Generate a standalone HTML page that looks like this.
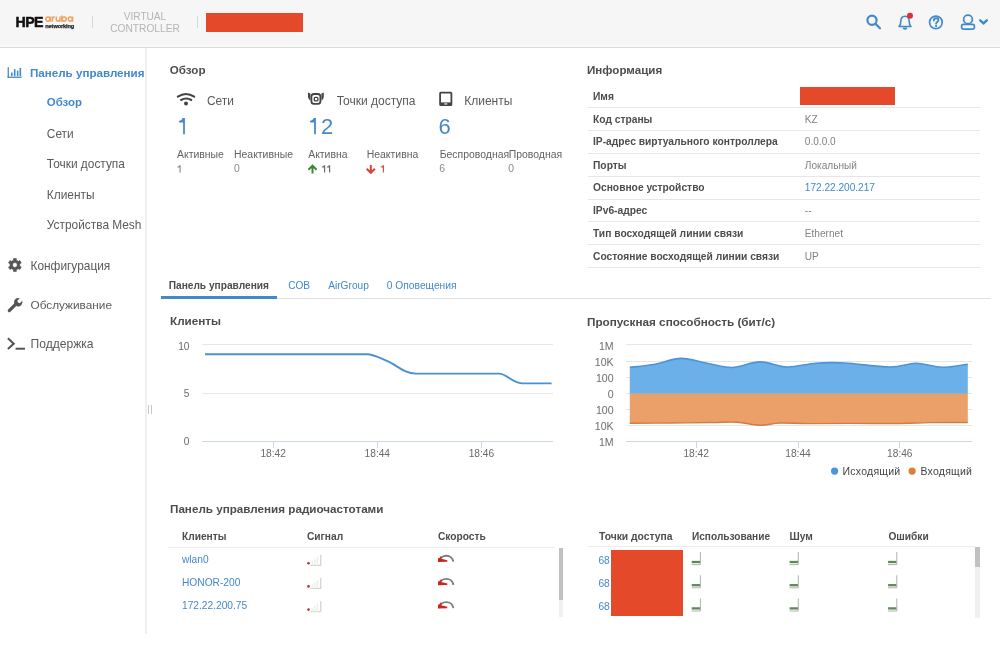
<!DOCTYPE html>
<html><head><meta charset="utf-8"><title>Virtual Controller</title>
<style>
html,body{margin:0;padding:0;background:#fff;width:1000px;height:667px;overflow:hidden;position:relative;}
body{filter:blur(0.3px);font-family:"Liberation Sans",sans-serif;}
.t{position:absolute;white-space:nowrap;line-height:1;}
.r{position:absolute;}
svg.r{overflow:visible;}
</style></head><body>
<div class="r" style="left:0.00px;top:0.00px;width:1000.00px;height:47.00px;background:#f6f6f6;"></div>
<div class="r" style="left:0.00px;top:45.20px;width:1000.00px;height:1.80px;background:#f9f9f9;"></div>
<div class="r" style="left:0.00px;top:47.00px;width:1000.00px;height:1.00px;background:#dcdcdc;"></div>
<div class="t" style="left:15.40px;top:14.700px;font-size:14.2px;font-weight:700;color:#111;letter-spacing:-0.5px;-webkit-text-stroke:0.5px #111;">HPE</div>
<svg class="r" style="left:40px;top:12px" width="40" height="12" viewBox="40 12 40 12"><g fill="none" stroke="#f0a060" stroke-width="1.5">
<circle cx="47.9" cy="19.1" r="2.05"/><path d="M50.1 16.6 V21.8"/>
<path d="M52.2 16.6 V21.8 M52.2 19.4 Q52.3 17.1 54.7 17.1"/>
<path d="M56.3 16.6 V19.3 Q56.3 21.1 58.15 21.1 Q60 21.1 60 19.3 V16.6 M60 19 V21.8"/>
<path d="M61.9 15.4 V21.8"/><circle cx="64.2" cy="19.1" r="2.05"/>
<circle cx="70.3" cy="19.1" r="2.05"/><path d="M72.6 16.6 V21.8"/>
</g></svg>
<div class="t" style="left:45.30px;top:23.600px;font-size:5.6px;font-weight:700;color:#222;letter-spacing:-0.1px;-webkit-text-stroke:0.25px #222;">networking</div>
<div class="r" style="left:91.50px;top:16.00px;width:1.00px;height:12.00px;background:#d8d8d8;"></div>
<div class="t" style="left:45.00px;width:200px;text-align:center;top:12.200px;font-size:10.1px;font-weight:400;color:#b5b5b5;">VIRTUAL</div>
<div class="t" style="left:45.00px;width:200px;text-align:center;top:23.800px;font-size:10.2px;font-weight:400;color:#b5b5b5;">CONTROLLER</div>
<div class="r" style="left:197.00px;top:16.00px;width:1.00px;height:12.00px;background:#d8d8d8;"></div>
<div class="r" style="left:206.00px;top:13.00px;width:97.00px;height:19.00px;background:#e4492a;"></div>
<svg class="r" style="left:860px;top:8px" width="135" height="30" viewBox="860 8 135 30">
<g fill="none" stroke="#4189cc" stroke-width="2.2" stroke-linecap="round">
<circle cx="872" cy="20.3" r="4.6"/><line x1="875.6" y1="24" x2="880" y2="28.3"/>
<path d="M899 26.5 C900.4 25.2 900.8 23.6 900.8 21.6 C900.8 18.4 902.6 16.3 905 16.3 C907.4 16.3 909.2 18.4 909.2 21.6 C909.2 23.6 909.6 25.2 911 26.5 Z" stroke-width="1.6" stroke-linejoin="round"/>
<path d="M903.5 28.3 Q905 29.5 906.5 28.3" stroke-width="1.5"/>
<circle cx="935.9" cy="22.4" r="6.3" stroke-width="1.7"/>
<path d="M933.8 20.6 C933.8 19 934.9 18.2 936.1 18.2 C937.4 18.2 938.4 19 938.4 20.3 C938.4 21.9 936.1 22 936.1 23.6" stroke-width="1.9"/>

<ellipse cx="968" cy="19.4" rx="4.4" ry="4.2" stroke-width="1.7"/>
<rect x="961.6" y="24.3" width="12.8" height="4.9" rx="1.6" stroke-width="1.7"/>
<path d="M980.2 20.3 L983.5 23.4 L986.8 20.3" stroke-width="2.4"/>
</g>
<line x1="903.7" y1="28.3" x2="906.3" y2="28.3" stroke="#4189cc" stroke-width="1.5"/>
<circle cx="936.1" cy="25.9" r="1.1" fill="#4189cc"/>
<circle cx="910" cy="15.8" r="3" fill="#e03030"/>
</svg>
<div class="r" style="left:145.00px;top:48.00px;width:2.00px;height:586.00px;background:#efefef;"></div>
<div class="r" style="left:148.00px;top:405.00px;width:1.00px;height:9.00px;background:#c6c6c6;"></div>
<div class="r" style="left:151.00px;top:405.00px;width:1.00px;height:9.00px;background:#c6c6c6;"></div>
<svg class="r" style="left:0px;top:250px" width="30" height="110" viewBox="0 250 30 110">
<g fill="#555">
<path d="M17.35 260.76 L16.41 260.34 L16.29 258.45 L13.51 258.45 L13.39 260.34 L12.45 260.76 L11.62 261.36 L9.92 260.52 L8.53 262.93 L10.11 263.98 L10.00 265.00 L10.11 266.02 L8.53 267.07 L9.92 269.48 L11.62 268.64 L12.45 269.24 L13.39 269.66 L13.51 271.55 L16.29 271.55 L16.41 269.66 L17.35 269.24 L18.18 268.64 L19.88 269.48 L21.27 267.07 L19.69 266.02 L19.80 265.00 L19.69 263.98 L21.27 262.93 L19.88 260.52 L18.18 261.36 Z M17.30 265.00 A2.4 2.4 0 1 0 12.50 265.00 A2.4 2.4 0 1 0 17.30 265.00 Z" fill-rule="evenodd" stroke="#555" stroke-width="0.6" stroke-linejoin="round"/>
</g>
<path d="M9.3 310.6 L15.8 304.1" stroke="#555" stroke-width="3.2" stroke-linecap="round"/>
<path d="M14.2 303.5 A4.3 4.3 0 0 1 19.8 298.2 L17.3 300.7 L18.0 302.5 L19.8 303.2 L22.2 300.8 A4.3 4.3 0 0 1 16.8 306.2 Z" fill="#555"/>
<path d="M7.9 338.3 L13.7 343.7 L7.9 349.1" fill="none" stroke="#555" stroke-width="2.1"/>
<rect x="15.6" y="347.7" width="9.4" height="2" fill="#555"/>
</svg>
<svg class="r" style="left:5px;top:64px" width="20" height="16" viewBox="5 64 20 16">
<g fill="#4189cc">
<rect x="7.6" y="67.2" width="1.3" height="10.7"/><rect x="7.6" y="76.6" width="14.1" height="1.3"/>
<rect x="11" y="72.5" width="1.6" height="3.6"/><rect x="13.9" y="69.2" width="1.6" height="6.9"/>
<rect x="16.9" y="70.7" width="1.5" height="5.4"/><rect x="19.5" y="68" width="1.6" height="8.1"/>
</g></svg>
<div class="t" style="left:30.00px;top:66.700px;font-size:11.6px;font-weight:700;color:#4189cc;">Панель управления</div>
<div class="t" style="left:46.80px;top:97.000px;font-size:11.45px;font-weight:700;color:#4189cc;">Обзор</div>
<div class="t" style="left:46.80px;top:128.500px;font-size:11.9px;font-weight:400;color:#5a5a5a;">Сети</div>
<div class="t" style="left:46.80px;top:159.200px;font-size:11.9px;font-weight:400;color:#5a5a5a;">Точки доступа</div>
<div class="t" style="left:46.80px;top:189.800px;font-size:11.9px;font-weight:400;color:#5a5a5a;">Клиенты</div>
<div class="t" style="left:46.80px;top:220.400px;font-size:11.9px;font-weight:400;color:#5a5a5a;">Устройства Mesh</div>
<div class="t" style="left:30.50px;top:261.200px;font-size:11.9px;font-weight:400;color:#5a5a5a;">Конфигурация</div>
<div class="t" style="left:30.50px;top:299.500px;font-size:11.8px;font-weight:400;color:#5a5a5a;">Обслуживание</div>
<div class="t" style="left:30.50px;top:338.300px;font-size:12.1px;font-weight:400;color:#5a5a5a;">Поддержка</div>
<div class="t" style="left:169.80px;top:63.800px;font-size:11.6px;font-weight:700;color:#4d4d4d;">Обзор</div>
<svg class="r" style="left:170px;top:85px" width="300" height="25" viewBox="170 85 300 25">
<g fill="none" stroke="#444" stroke-width="2.1" stroke-linecap="round">
<path d="M177.8 96.7 Q186 91.3 194.2 96.7"/><path d="M181.1 100 Q186.2 97 191.3 100"/>
</g>
<circle cx="186" cy="103.6" r="2" fill="#444"/>
<rect x="311.4" y="94" width="9" height="9.8" rx="2.6" fill="none" stroke="#444" stroke-width="1.8"/>
<path d="M308 92.4 L310.4 93.6 L310.4 100.8 Q308.4 99.5 308 97 Z" fill="#444"/>
<path d="M323.8 92.4 L321.4 93.6 L321.4 100.8 Q323.4 99.5 323.8 97 Z" fill="#444"/>
<rect x="314.3" y="97.3" width="3.6" height="3.6" rx="1" fill="none" stroke="#444" stroke-width="1.3"/>
<rect x="440.1" y="92.6" width="11.3" height="12.6" rx="0.6" fill="none" stroke="#444" stroke-width="1.8"/>
<rect x="440.1" y="102.4" width="11.3" height="3" fill="#444"/>
<rect x="444.3" y="103.4" width="3" height="1.1" fill="#fff"/>
</svg>
<div class="t" style="left:207.00px;top:95.700px;font-size:11.9px;font-weight:400;color:#5a5a5a;">Сети</div>
<div class="t" style="left:336.70px;top:94.500px;font-size:12.0px;font-weight:400;color:#5a5a5a;">Точки доступа</div>
<div class="t" style="left:464.20px;top:94.500px;font-size:12.0px;font-weight:400;color:#5a5a5a;">Клиенты</div>
<div class="t" style="left:320.90px;top:116.300px;font-size:22px;font-weight:400;color:#4689c8;">2</div>
<div class="t" style="left:438.60px;top:116.300px;font-size:22px;font-weight:400;color:#4689c8;">6</div>
<svg class="r" style="left:0;top:0" width="1000" height="667" viewBox="0 0 1000 667"><path d="M184.90 118.10 L184.90 134.20 L183.10 134.20 L183.10 122.50 L179.00 122.50 L179.00 120.90 Q181.80 120.70 182.70 118.10 Z" fill="#4689c8"/><path d="M315.90 118.10 L315.90 134.20 L314.10 134.20 L314.10 122.50 L310.00 122.50 L310.00 120.90 Q312.80 120.70 313.70 118.10 Z" fill="#4689c8"/></svg>
<div class="t" style="left:177.00px;top:150.400px;font-size:10.45px;font-weight:400;color:#626262;">Активные</div>
<div class="t" style="left:234.00px;top:150.400px;font-size:10.45px;font-weight:400;color:#626262;">Неактивные</div>
<div class="t" style="left:308.20px;top:150.400px;font-size:10.45px;font-weight:400;color:#626262;">Активна</div>
<div class="t" style="left:366.70px;top:150.400px;font-size:10.45px;font-weight:400;color:#626262;">Неактивна</div>
<div class="t" style="left:439.70px;top:150.400px;font-size:10.45px;font-weight:400;color:#626262;">Беспроводная</div>
<div class="t" style="left:508.70px;top:150.400px;font-size:10.45px;font-weight:400;color:#626262;">Проводная</div>
<div class="t" style="left:234.00px;top:164.400px;font-size:10.4px;font-weight:400;color:#8a8a8a;">0</div>
<div class="t" style="left:439.20px;top:164.400px;font-size:10.4px;font-weight:400;color:#8a8a8a;">6</div>
<div class="t" style="left:508.20px;top:164.400px;font-size:10.4px;font-weight:400;color:#8a8a8a;">0</div>
<svg class="r" style="left:0;top:0" width="1000" height="667" viewBox="0 0 1000 667"><path d="M180.70 165.20 L180.70 172.60 L179.50 172.60 L179.50 167.40 L177.40 167.40 L177.40 166.50 Q178.90 166.40 179.40 165.20 Z" fill="#8f8f8f"/><path d="M325.20 165.30 L325.20 172.60 L324.00 172.60 L324.00 167.50 L321.90 167.50 L321.90 166.60 Q323.40 166.50 323.90 165.30 Z" fill="#6f6f6f"/><path d="M330.20 165.30 L330.20 172.60 L329.00 172.60 L329.00 167.50 L326.90 167.50 L326.90 166.60 Q328.40 166.50 328.90 165.30 Z" fill="#6f6f6f"/><path d="M384.00 165.30 L384.00 172.60 L382.80 172.60 L382.80 167.50 L380.70 167.50 L380.70 166.60 Q382.20 166.50 382.70 165.30 Z" fill="#d9504a"/></svg>
<svg class="r" style="left:300px;top:160px" width="90" height="18" viewBox="300 160 90 18">
<g fill="none" stroke-width="1.8" stroke-linecap="butt">
<path d="M312.5 173.5 V166.2 M308.4 169.8 L312.5 165.7 L316.6 169.8" stroke="#3b8a3b" stroke-width="2"/>
<path d="M370.8 165 V172.3 M366.7 168.7 L370.8 172.8 L374.9 168.7" stroke="#d9443a" stroke-width="2"/>
</g></svg>
<div class="t" style="left:587.00px;top:64.000px;font-size:11.6px;font-weight:700;color:#4d4d4d;">Информация</div>
<div class="r" style="left:587.60px;top:107.00px;width:392.20px;height:1.00px;background:#e6e6e6;"></div>
<div class="r" style="left:587.60px;top:129.70px;width:392.20px;height:1.00px;background:#e6e6e6;"></div>
<div class="r" style="left:587.60px;top:152.80px;width:392.20px;height:1.00px;background:#e6e6e6;"></div>
<div class="r" style="left:587.60px;top:175.50px;width:392.20px;height:1.00px;background:#e6e6e6;"></div>
<div class="r" style="left:587.60px;top:198.50px;width:392.20px;height:1.00px;background:#e6e6e6;"></div>
<div class="r" style="left:587.60px;top:221.30px;width:392.20px;height:1.00px;background:#e6e6e6;"></div>
<div class="r" style="left:587.60px;top:244.00px;width:392.20px;height:1.00px;background:#e6e6e6;"></div>
<div class="r" style="left:587.60px;top:266.70px;width:392.20px;height:1.00px;background:#e6e6e6;"></div>
<div class="t" style="left:593.00px;top:91.900px;font-size:10.25px;font-weight:700;color:#4d4d4d;">Имя</div>
<div class="t" style="left:593.00px;top:114.700px;font-size:10.25px;font-weight:700;color:#4d4d4d;">Код страны</div>
<div class="t" style="left:804.80px;top:114.700px;font-size:10.1px;font-weight:400;color:#828282;">KZ</div>
<div class="t" style="left:593.00px;top:137.400px;font-size:10.25px;font-weight:700;color:#4d4d4d;">IP-адрес виртуального контроллера</div>
<div class="t" style="left:804.80px;top:137.400px;font-size:10.1px;font-weight:400;color:#828282;">0.0.0.0</div>
<div class="t" style="left:593.00px;top:160.500px;font-size:10.25px;font-weight:700;color:#4d4d4d;">Порты</div>
<div class="t" style="left:804.80px;top:160.500px;font-size:10.1px;font-weight:400;color:#828282;">Локальный</div>
<div class="t" style="left:593.00px;top:183.200px;font-size:10.25px;font-weight:700;color:#4d4d4d;">Основное устройство</div>
<div class="t" style="left:804.80px;top:183.200px;font-size:10.1px;font-weight:400;color:#4189cc;">172.22.200.217</div>
<div class="t" style="left:593.00px;top:206.200px;font-size:10.25px;font-weight:700;color:#4d4d4d;">IPv6-адрес</div>
<div class="t" style="left:804.80px;top:206.200px;font-size:10.1px;font-weight:400;color:#828282;">--</div>
<div class="t" style="left:593.00px;top:229.000px;font-size:10.25px;font-weight:700;color:#4d4d4d;">Тип восходящей линии связи</div>
<div class="t" style="left:804.80px;top:229.000px;font-size:10.1px;font-weight:400;color:#828282;">Ethernet</div>
<div class="t" style="left:593.00px;top:251.700px;font-size:10.25px;font-weight:700;color:#4d4d4d;">Состояние восходящей линии связи</div>
<div class="t" style="left:804.80px;top:251.700px;font-size:10.1px;font-weight:400;color:#828282;">UP</div>
<div class="r" style="left:800.00px;top:86.70px;width:95.00px;height:18.10px;background:#e4492a;"></div>
<div class="r" style="left:160.90px;top:297.50px;width:830.10px;height:1.00px;background:#e2e2e2;"></div>
<div class="r" style="left:160.90px;top:296.00px;width:115.90px;height:3.00px;background:#4189cc;"></div>
<div class="t" style="left:168.70px;top:280.800px;font-size:10.16px;font-weight:700;color:#4d4d4d;">Панель управления</div>
<div class="t" style="left:288.20px;top:280.800px;font-size:10.1px;font-weight:400;color:#4189cc;">COB</div>
<div class="t" style="left:328.20px;top:280.800px;font-size:10.17px;font-weight:400;color:#4189cc;">AirGroup</div>
<div class="t" style="left:386.80px;top:280.800px;font-size:10.26px;font-weight:400;color:#4189cc;">0 Оповещения</div>
<div class="t" style="left:170.00px;top:314.700px;font-size:11.7px;font-weight:700;color:#4d4d4d;">Клиенты</div>
<div class="r" style="left:202.00px;top:343.60px;width:351.30px;height:1.00px;background:#e6e6e6;"></div>
<div class="r" style="left:202.00px;top:393.20px;width:351.30px;height:1.00px;background:#e6e6e6;"></div>
<div class="r" style="left:202.00px;top:440.70px;width:351.30px;height:1.00px;background:#ccd6eb;"></div>
<div class="r" style="left:272.70px;top:441.20px;width:1.00px;height:6.50px;background:#ccd6eb;"></div>
<div class="r" style="left:376.80px;top:441.20px;width:1.00px;height:6.50px;background:#ccd6eb;"></div>
<div class="r" style="left:480.90px;top:441.20px;width:1.00px;height:6.50px;background:#ccd6eb;"></div>
<div class="t" style="right:810.50px;top:341.600px;font-size:10.2px;font-weight:400;color:#6a6a6a;">10</div>
<div class="t" style="right:810.50px;top:389.400px;font-size:10.2px;font-weight:400;color:#6a6a6a;">5</div>
<div class="t" style="right:810.50px;top:437.100px;font-size:10.2px;font-weight:400;color:#6a6a6a;">0</div>
<div class="t" style="left:173.20px;width:200px;text-align:center;top:449.400px;font-size:10.2px;font-weight:400;color:#6a6a6a;">18:42</div>
<div class="t" style="left:277.30px;width:200px;text-align:center;top:449.400px;font-size:10.2px;font-weight:400;color:#6a6a6a;">18:44</div>
<div class="t" style="left:381.40px;width:200px;text-align:center;top:449.400px;font-size:10.2px;font-weight:400;color:#6a6a6a;">18:46</div>
<svg class="r" style="left:0;top:0" width="1000" height="667" viewBox="0 0 1000 667"><path d="M205 354.21 L367 354.21 C374 354.21 380 358.09 388 361.49 C398 365.86 404 373.63 416 373.63 L499 373.63 C507 373.63 512 383.34 522 383.34 L551.6 383.34" fill="none" stroke="#4a90d2" stroke-width="1.9" stroke-linejoin="round"/></svg>
<div class="t" style="left:587.00px;top:315.900px;font-size:11.73px;font-weight:700;color:#4d4d4d;">Пропускная способность (бит/с)</div>
<div class="r" style="left:626.20px;top:344.20px;width:345.80px;height:1.00px;background:#e6e6e6;"></div>
<div class="r" style="left:626.20px;top:360.60px;width:345.80px;height:1.00px;background:#e6e6e6;"></div>
<div class="r" style="left:626.20px;top:376.80px;width:345.80px;height:1.00px;background:#e6e6e6;"></div>
<div class="r" style="left:626.20px;top:392.50px;width:345.80px;height:1.00px;background:#e6e6e6;"></div>
<div class="r" style="left:626.20px;top:408.90px;width:345.80px;height:1.00px;background:#e6e6e6;"></div>
<div class="r" style="left:626.20px;top:424.50px;width:345.80px;height:1.00px;background:#e6e6e6;"></div>
<div class="r" style="left:626.20px;top:440.80px;width:345.80px;height:1.00px;background:#ccd6eb;"></div>
<div class="t" style="right:386.40px;top:340.600px;font-size:10.6px;font-weight:400;color:#6e6e6e;">1M</div>
<div class="t" style="right:386.40px;top:357.000px;font-size:10.6px;font-weight:400;color:#6e6e6e;">10K</div>
<div class="t" style="right:386.40px;top:373.200px;font-size:10.6px;font-weight:400;color:#6e6e6e;">100</div>
<div class="t" style="right:386.40px;top:388.900px;font-size:10.6px;font-weight:400;color:#6e6e6e;">0</div>
<div class="t" style="right:386.40px;top:405.300px;font-size:10.6px;font-weight:400;color:#6e6e6e;">100</div>
<div class="t" style="right:386.40px;top:420.900px;font-size:10.6px;font-weight:400;color:#6e6e6e;">10K</div>
<div class="t" style="right:386.40px;top:437.200px;font-size:10.6px;font-weight:400;color:#6e6e6e;">1M</div>
<div class="r" style="left:695.70px;top:441.30px;width:1.00px;height:6.70px;background:#ccd6eb;"></div>
<div class="t" style="left:596.20px;width:200px;text-align:center;top:449.400px;font-size:10.2px;font-weight:400;color:#6a6a6a;">18:42</div>
<div class="r" style="left:797.50px;top:441.30px;width:1.00px;height:6.70px;background:#ccd6eb;"></div>
<div class="t" style="left:698.00px;width:200px;text-align:center;top:449.400px;font-size:10.2px;font-weight:400;color:#6a6a6a;">18:44</div>
<div class="r" style="left:899.30px;top:441.30px;width:1.00px;height:6.70px;background:#ccd6eb;"></div>
<div class="t" style="left:799.80px;width:200px;text-align:center;top:449.400px;font-size:10.2px;font-weight:400;color:#6a6a6a;">18:46</div>
<svg class="r" style="left:0;top:0" width="1000" height="667" viewBox="0 0 1000 667">
<path d="M629.80 367.40 C634.00 366.87 646.47 365.70 655.00 364.20 C663.53 362.70 672.50 358.60 681.00 358.40 C689.50 358.20 697.50 361.48 706.00 363.00 C714.50 364.52 723.00 367.68 732.00 367.50 C741.00 367.32 750.83 361.98 760.00 361.90 C769.17 361.82 777.67 366.78 787.00 367.00 C796.33 367.22 806.33 363.87 816.00 363.20 C825.67 362.53 832.67 362.37 845.00 363.00 C857.33 363.63 878.17 366.95 890.00 367.00 C901.83 367.05 907.33 363.25 916.00 363.30 C924.67 363.35 933.37 367.15 942.00 367.30 C950.63 367.45 963.50 364.72 967.80 364.20 L967.8 393.8 L629.8 393.8 Z" fill="#6cb0e9"/>
<path d="M629.80 367.40 C634.00 366.87 646.47 365.70 655.00 364.20 C663.53 362.70 672.50 358.60 681.00 358.40 C689.50 358.20 697.50 361.48 706.00 363.00 C714.50 364.52 723.00 367.68 732.00 367.50 C741.00 367.32 750.83 361.98 760.00 361.90 C769.17 361.82 777.67 366.78 787.00 367.00 C796.33 367.22 806.33 363.87 816.00 363.20 C825.67 362.53 832.67 362.37 845.00 363.00 C857.33 363.63 878.17 366.95 890.00 367.00 C901.83 367.05 907.33 363.25 916.00 363.30 C924.67 363.35 933.37 367.15 942.00 367.30 C950.63 367.45 963.50 364.72 967.80 364.20" fill="none" stroke="#4b94d6" stroke-width="1.6"/>
<path d="M629.80 423.20 C636.50 423.17 656.30 423.12 670.00 423.00 C683.70 422.88 700.83 422.63 712.00 422.50 C723.17 422.37 729.00 421.73 737.00 422.20 C745.00 422.67 752.83 425.17 760.00 425.30 C767.17 425.43 772.00 423.28 780.00 423.00 C788.00 422.72 796.33 423.53 808.00 423.60 C819.67 423.67 834.50 423.42 850.00 423.40 C865.50 423.38 887.83 423.63 901.00 423.50 C914.17 423.37 917.87 422.77 929.00 422.60 C940.13 422.43 961.33 422.52 967.80 422.50 L967.8 393.8 L629.8 393.8 Z" fill="#eba06a"/>
<path d="M629.80 423.20 C636.50 423.17 656.30 423.12 670.00 423.00 C683.70 422.88 700.83 422.63 712.00 422.50 C723.17 422.37 729.00 421.73 737.00 422.20 C745.00 422.67 752.83 425.17 760.00 425.30 C767.17 425.43 772.00 423.28 780.00 423.00 C788.00 422.72 796.33 423.53 808.00 423.60 C819.67 423.67 834.50 423.42 850.00 423.40 C865.50 423.38 887.83 423.63 901.00 423.50 C914.17 423.37 917.87 422.77 929.00 422.60 C940.13 422.43 961.33 422.52 967.80 422.50" fill="none" stroke="#d27b42" stroke-width="1.4"/>
<line x1="629.8" y1="393.8" x2="967.6" y2="393.8" stroke="#b9a08a" stroke-width="0.6"/>
<circle cx="834.6" cy="471.1" r="3.6" fill="#4a95dd"/>
<circle cx="912.1" cy="471.1" r="3.6" fill="#e07e35"/>
</svg>
<div class="t" style="left:842.50px;top:465.900px;font-size:10.5px;font-weight:400;color:#444;letter-spacing:0.25px;">Исходящий</div>
<div class="t" style="left:920.40px;top:465.900px;font-size:10.5px;font-weight:400;color:#444;letter-spacing:0.25px;">Входящий</div>
<div class="t" style="left:170.00px;top:503.400px;font-size:11.67px;font-weight:700;color:#4d4d4d;">Панель управления радиочастотами</div>
<div class="t" style="left:182.00px;top:532.000px;font-size:10.2px;font-weight:700;color:#4d4d4d;">Клиенты</div>
<div class="t" style="left:307.00px;top:532.000px;font-size:10.2px;font-weight:700;color:#4d4d4d;">Сигнал</div>
<div class="t" style="left:438.00px;top:532.000px;font-size:10.2px;font-weight:700;color:#4d4d4d;">Скорость</div>
<div class="r" style="left:168.40px;top:546.50px;width:386.60px;height:1.00px;background:#ececec;"></div>
<div class="t" style="left:182.00px;top:555.000px;font-size:10.2px;font-weight:400;color:#4189cc;">wlan0</div>
<div class="t" style="left:182.00px;top:578.200px;font-size:10.2px;font-weight:400;color:#4189cc;">HONOR-200</div>
<div class="t" style="left:182.00px;top:601.400px;font-size:10.2px;font-weight:400;color:#4189cc;">172.22.200.75</div>
<svg class="r" style="left:0;top:0" width="1000" height="667" viewBox="0 0 1000 667"><circle cx="308.5" cy="563.20" r="1.3" fill="#b03535"/>
<path d="M310.5 565.30 H320.8 V554.60" fill="none" stroke="#c8c8c8" stroke-width="1"/>
<path d="M312.5 565.30 V561.00 M315 565.30 V559.00 M317.5 565.30 V557.00" fill="none" stroke="#eee" stroke-width="1.5"/>
<path d="M439.2 561.70 A7.2 7.2 0 0 1 453.4 561.70" fill="none" stroke="#7c7c7c" stroke-width="1.9"/>
<path d="M439.2 561.70 A7.2 7.2 0 0 1 441.4 556.60" fill="none" stroke="#cc3322" stroke-width="1.8"/>
<path d="M438 558.00 L447.3 560.30 L447.3 561.80 L438 562.00 Z" fill="#c9281c"/><circle cx="308.5" cy="586.40" r="1.3" fill="#b03535"/>
<path d="M310.5 588.50 H320.8 V577.80" fill="none" stroke="#c8c8c8" stroke-width="1"/>
<path d="M312.5 588.50 V584.20 M315 588.50 V582.20 M317.5 588.50 V580.20" fill="none" stroke="#eee" stroke-width="1.5"/>
<path d="M439.2 584.90 A7.2 7.2 0 0 1 453.4 584.90" fill="none" stroke="#7c7c7c" stroke-width="1.9"/>
<path d="M439.2 584.90 A7.2 7.2 0 0 1 441.4 579.80" fill="none" stroke="#cc3322" stroke-width="1.8"/>
<path d="M438 581.20 L447.3 583.50 L447.3 585.00 L438 585.20 Z" fill="#c9281c"/><circle cx="308.5" cy="609.60" r="1.3" fill="#b03535"/>
<path d="M310.5 611.70 H320.8 V601.00" fill="none" stroke="#c8c8c8" stroke-width="1"/>
<path d="M312.5 611.70 V607.40 M315 611.70 V605.40 M317.5 611.70 V603.40" fill="none" stroke="#eee" stroke-width="1.5"/>
<path d="M439.2 608.10 A7.2 7.2 0 0 1 453.4 608.10" fill="none" stroke="#7c7c7c" stroke-width="1.9"/>
<path d="M439.2 608.10 A7.2 7.2 0 0 1 441.4 603.00" fill="none" stroke="#cc3322" stroke-width="1.8"/>
<path d="M438 604.40 L447.3 606.70 L447.3 608.20 L438 608.40 Z" fill="#c9281c"/></svg>
<div class="r" style="left:558.50px;top:547.50px;width:4.90px;height:69.50px;background:#f0f0f0;"></div>
<div class="r" style="left:558.50px;top:547.50px;width:4.90px;height:52.20px;background:#c1c1c1;"></div>
<div class="t" style="left:599.00px;top:531.900px;font-size:10.3px;font-weight:700;color:#4d4d4d;">Точки доступа</div>
<div class="t" style="left:692.00px;top:531.900px;font-size:10.1px;font-weight:700;color:#4d4d4d;">Использование</div>
<div class="t" style="left:789.50px;top:531.900px;font-size:10.2px;font-weight:700;color:#4d4d4d;">Шум</div>
<div class="t" style="left:888.40px;top:531.900px;font-size:10.2px;font-weight:700;color:#4d4d4d;">Ошибки</div>
<div class="r" style="left:587.60px;top:545.50px;width:387.00px;height:1.00px;background:#ececec;"></div>
<div class="t" style="left:598.40px;top:555.800px;font-size:10.2px;font-weight:400;color:#4189cc;">68</div>
<div class="t" style="left:598.40px;top:579.000px;font-size:10.2px;font-weight:400;color:#4189cc;">68</div>
<div class="t" style="left:598.40px;top:602.200px;font-size:10.2px;font-weight:400;color:#4189cc;">68</div>
<svg class="r" style="left:0;top:0" width="1000" height="667" viewBox="0 0 1000 667"><path d="M691.70 562.00 H700.10" stroke="#5c8a52" stroke-width="2.3"/><path d="M700.40 552.10 V564.60 H691.60" fill="none" stroke="#a8a8a8" stroke-width="0.9"/><path d="M789.60 562.00 H798.00" stroke="#5c8a52" stroke-width="2.3"/><path d="M798.30 552.10 V564.60 H789.50" fill="none" stroke="#a8a8a8" stroke-width="0.9"/><path d="M888.10 562.00 H896.50" stroke="#5c8a52" stroke-width="2.3"/><path d="M896.80 552.10 V564.60 H888.00" fill="none" stroke="#a8a8a8" stroke-width="0.9"/><path d="M691.70 585.20 H700.10" stroke="#5c8a52" stroke-width="2.3"/><path d="M700.40 575.30 V587.80 H691.60" fill="none" stroke="#a8a8a8" stroke-width="0.9"/><path d="M789.60 585.20 H798.00" stroke="#5c8a52" stroke-width="2.3"/><path d="M798.30 575.30 V587.80 H789.50" fill="none" stroke="#a8a8a8" stroke-width="0.9"/><path d="M888.10 585.20 H896.50" stroke="#5c8a52" stroke-width="2.3"/><path d="M896.80 575.30 V587.80 H888.00" fill="none" stroke="#a8a8a8" stroke-width="0.9"/><path d="M691.70 608.40 H700.10" stroke="#5c8a52" stroke-width="2.3"/><path d="M700.40 598.50 V611.00 H691.60" fill="none" stroke="#a8a8a8" stroke-width="0.9"/><path d="M789.60 608.40 H798.00" stroke="#5c8a52" stroke-width="2.3"/><path d="M798.30 598.50 V611.00 H789.50" fill="none" stroke="#a8a8a8" stroke-width="0.9"/><path d="M888.10 608.40 H896.50" stroke="#5c8a52" stroke-width="2.3"/><path d="M896.80 598.50 V611.00 H888.00" fill="none" stroke="#a8a8a8" stroke-width="0.9"/></svg>
<div class="r" style="left:611.00px;top:549.60px;width:72.00px;height:66.00px;background:#e4492a;"></div>
<div class="r" style="left:975.30px;top:547.00px;width:4.40px;height:70.70px;background:#f0f0f0;"></div>
<div class="r" style="left:975.30px;top:547.00px;width:4.40px;height:20.00px;background:#c1c1c1;"></div>
</body></html>
